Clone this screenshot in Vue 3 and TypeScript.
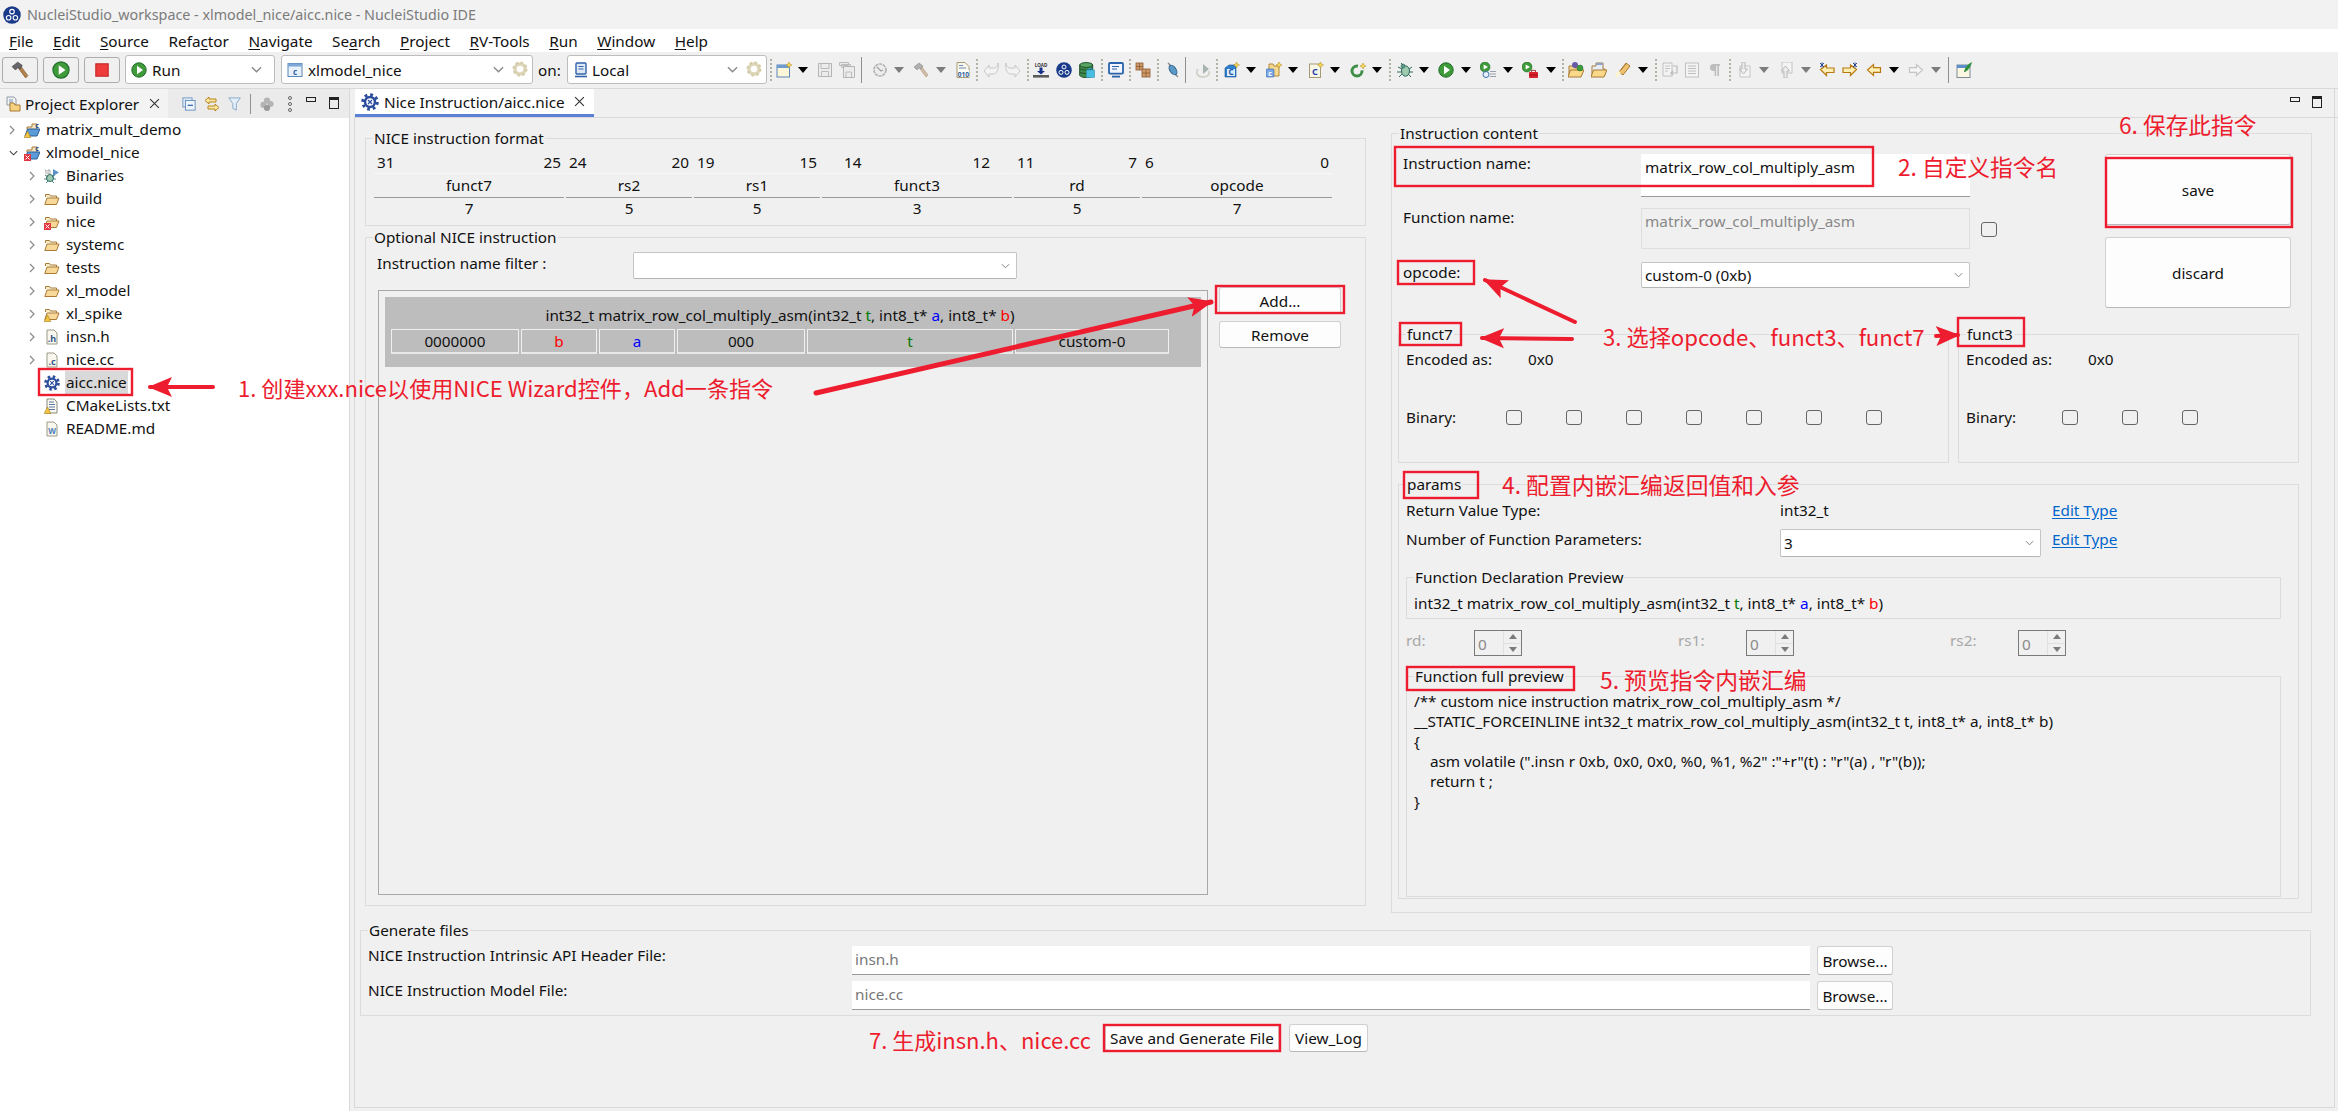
<script setup lang="ts">
interface TbItem { k: string; x: number }
const tbRaw: TbItem[] = [
  { k: 'dot', x: 769 }, { k: 'new', x: 775 }, { k: 'caret', x: 797 }, { k: 'save', x: 816 }, { k: 'saveall', x: 838 }, { k: 'sep', x: 860 },
  { k: 'gearg', x: 871 }, { k: 'caretg', x: 893 }, { k: 'hammerg', x: 912 }, { k: 'caretg', x: 935 }, { k: 'bin', x: 954 }, { k: 'dot', x: 975 },
  { k: 'backg', x: 982 }, { k: 'fwdg', x: 1004 }, { k: 'dot', x: 1026 }, { k: 'load', x: 1032 }, { k: 'nuclei', x: 1055 }, { k: 'db', x: 1078 }, { k: 'dot', x: 1100 },
  { k: 'monitor', x: 1107 }, { k: 'dot', x: 1128 }, { k: 'bricks', x: 1134 }, { k: 'dot', x: 1156 }, { k: 'probe', x: 1164 }, { k: 'sep', x: 1184 },
  { k: 'redo', x: 1194 }, { k: 'dot', x: 1215 }, { k: 'newc', x: 1223 }, { k: 'caret', x: 1245 }, { k: 'newf', x: 1265 }, { k: 'caret', x: 1287 },
  { k: 'newfile', x: 1307 }, { k: 'caret', x: 1329 }, { k: 'newcls', x: 1349 }, { k: 'caret', x: 1371 }, { k: 'dot', x: 1388 }, { k: 'bug', x: 1396 },
  { k: 'caret', x: 1418 }, { k: 'play', x: 1437 }, { k: 'caret', x: 1460 }, { k: 'runlist', x: 1479 }, { k: 'caret', x: 1502 }, { k: 'runtool', x: 1521 },
  { k: 'caret', x: 1545 }, { k: 'dot', x: 1561 }, { k: 'opendb', x: 1567 }, { k: 'openf', x: 1590 }, { k: 'pen', x: 1614 }, { k: 'caret', x: 1637 }, { k: 'dot', x: 1654 },
  { k: 'fmtg', x: 1661 }, { k: 'blockg', x: 1683 }, { k: 'para', x: 1706 }, { k: 'dot', x: 1728 }, { k: 'nextg', x: 1736 }, { k: 'caretg', x: 1758 },
  { k: 'prevg', x: 1778 }, { k: 'caretg', x: 1800 }, { k: 'backs', x: 1818 }, { k: 'fwds', x: 1841 }, { k: 'back', x: 1865 }, { k: 'caret', x: 1888 },
  { k: 'fwdg2', x: 1907 }, { k: 'caretg', x: 1930 }, { k: 'sep', x: 1947 }, { k: 'notes', x: 1955 }
]
const toolbar = tbRaw.map((it, i) => ({
  ...it,
  w: i + 1 < tbRaw.length ? tbRaw[i + 1].x - it.x : 16
}))

const menu = [
  ['', 'F', 'ile'], ['', 'E', 'dit'], ['', 'S', 'ource'], ['Refa', 'c', 'tor'], ['', 'N', 'avigate'], ['Se', 'a', 'rch'],
  ['', 'P', 'roject'], ['', 'R', 'V-Tools'], ['', 'R', 'un'], ['', 'W', 'indow'], ['', 'H', 'elp']
]

const tree = [
  { t: 'matrix_mult_demo', lv: 0, ic: 'projw', ch: 'r' },
  { t: 'xlmodel_nice', lv: 0, ic: 'projx', ch: 'd' },
  { t: 'Binaries', lv: 1, ic: 'binaries', ch: 'r' },
  { t: 'build', lv: 1, ic: 'folder', ch: 'r' },
  { t: 'nice', lv: 1, ic: 'folderx', ch: 'r' },
  { t: 'systemc', lv: 1, ic: 'folder', ch: 'r' },
  { t: 'tests', lv: 1, ic: 'folder', ch: 'r' },
  { t: 'xl_model', lv: 1, ic: 'folder', ch: 'r' },
  { t: 'xl_spike', lv: 1, ic: 'folderw', ch: 'r' },
  { t: 'insn.h', lv: 1, ic: 'hfile', ch: 'r' },
  { t: 'nice.cc', lv: 1, ic: 'cfile', ch: 'r' },
  { t: 'aicc.nice', lv: 1, ic: 'gear', ch: '', sel: true },
  { t: 'CMakeLists.txt', lv: 1, ic: 'txtw', ch: '' },
  { t: 'README.md', lv: 1, ic: 'wdoc', ch: '' }
]

const fmt = [
  { hi: '31', lo: '25', n: 'funct7', c: '7', w: 190, wide: false },
  { hi: '24', lo: '20', n: 'rs2', c: '5', w: 126, wide: false },
  { hi: '19', lo: '15', n: 'rs1', c: '5', w: 126, wide: false },
  { hi: '14', lo: '12', n: 'funct3', c: '3', w: 190, wide: true },
  { hi: '11', lo: '7', n: 'rd', c: '5', w: 126, wide: false },
  { hi: '6', lo: '0', n: 'opcode', c: '7', w: 190, wide: false }
]

const cells = [
  { t: '0000000', w: 128, cls: '' }, { t: 'b', w: 76, cls: 'red' }, { t: 'a', w: 76, cls: 'blue' },
  { t: '000', w: 128, cls: '' }, { t: 't', w: 206, cls: 'green' }, { t: 'custom-0', w: 154, cls: '' }
]

const funct = [
  { name: 'funct7', w: 551, lab: 100, boxes: 7 },
  { name: 'funct3', w: 341, lab: 96, boxes: 3 }
]

const spins = ['rd:', 'rs1:', 'rs2:']

const redRects = [
  [39, 369, 132, 395], [1216, 286, 1344, 313], [1395, 147, 1873, 186], [1398, 261, 1474, 284],
  [1400, 323, 1461, 345], [1958, 318, 2024, 346], [2106, 158, 2292, 227], [1404, 472, 1478, 498],
  [1407, 667, 1574, 690], [1104, 1025, 1280, 1051]
]

const arrows = [
  [213, 387, 150, 387, 4], [816, 393, 1211, 302, 5], [1575, 322, 1485, 280, 4],
  [1572, 339, 1482, 338, 4], [1936, 336, 1958, 335, 4]
]

const notes = [
  { t: '1. 创建xxx.nice以使用NICE Wizard控件，Add一条指令', x: 238, y: 387, fs: 22.1 },
  { t: '2. 自定义指令名', x: 1898, y: 167, fs: 22.7 },
  { t: '3. 选择opcode、funct3、funct7', x: 1603, y: 336, fs: 22.2 },
  { t: '4. 配置内嵌汇编返回值和入参', x: 1502, y: 485, fs: 22.8 },
  { t: '5. 预览指令内嵌汇编', x: 1600, y: 680, fs: 22.8 },
  { t: '6. 保存此指令', x: 2119, y: 125, fs: 22.7 },
  { t: '7. 生成insn.h、nice.cc', x: 869, y: 1039, fs: 22 }
]
</script>

<template>
  <div class="ide">
    <svg class="defs" width="0" height="0" aria-hidden="true">
      <defs>
        <symbol id="play" viewBox="0 0 16 16"><circle cx="8" cy="8" r="7.2" fill="#3f9a3a" stroke="#1f6b2a" /><path d="M6 3.8L12 8l-6 4.2z" fill="#fff" /></symbol>
        <symbol id="stop" viewBox="0 0 16 16"><rect x="2.5" y="2.5" width="11" height="11" fill="#ee3b3b" stroke="#c32a2a" /></symbol>
        <symbol id="hammer" viewBox="0 0 16 16"><path d="M7 7l2-2 6 8-2 2z" fill="#b5824e" stroke="#7a5428" stroke-width=".6" /><path d="M1 5l5-4 4 3-2 3-2-1-2 2z" fill="#66666a" stroke="#3a3a3a" stroke-width=".6" /></symbol>
        <symbol id="hammerg" viewBox="0 0 16 16"><path d="M7 7l2-2 6 8-2 2z" fill="#d4bca4" stroke="#a89880" stroke-width=".6" /><path d="M1 5l5-4 4 3-2 3-2-1-2 2z" fill="#b0b0b0" stroke="#8c8c8c" stroke-width=".6" /></symbol>
        <symbol id="cbox" viewBox="0 0 16 16"><rect x="1" y="1.5" width="14" height="13" fill="#e8f0fa" stroke="#5a86b5" /><rect x="1" y="1.5" width="14" height="3" fill="#7da7d6" /><text x="8" y="12.8" font-size="8" font-weight="700" fill="#2b62a8" text-anchor="middle" font-family="Noto Sans">c</text></symbol>
        <symbol id="computer" viewBox="0 0 16 16"><rect x="3" y="1" width="10" height="11" rx="1" fill="#dfe9f6" stroke="#2f63a8" stroke-width="1.4" /><path d="M5.5 4.5h5M5.5 7h5" stroke="#2f63a8" /><path d="M2 14.5h12" stroke="#2f63a8" stroke-width="1.6" /></symbol>
        <symbol id="cfgear" viewBox="0 0 16 16"><circle cx="8" cy="8" r="5" fill="none" stroke="#ddd6b8" stroke-width="3.4" /><circle cx="8" cy="8" r="6.4" fill="none" stroke="#d3cba8" stroke-width="2.2" stroke-dasharray="2.4 2.6" /></symbol>
        <symbol id="new" viewBox="0 0 16 16"><rect x="1" y="3" width="12.5" height="12" fill="#fdf6d8" stroke="#5a86b5" /><rect x="1" y="3" width="12.5" height="3" fill="#6d9bd0" /><path d="M13 0l1 2 2 1-2 1-1 2-1-2-2-1 2-1z" fill="#f7d65c" stroke="#b08a1f" stroke-width=".5" /></symbol>
        <symbol id="save" viewBox="0 0 16 16"><path d="M1.5 1.5h13v13h-13z" fill="#ececec" stroke="#b4b4b4" /><path d="M4 1.5v5h8v-5M4.5 14.5v-5h7v5" fill="none" stroke="#bcbcbc" /></symbol>
        <symbol id="saveall" viewBox="0 0 16 16"><path d="M.5.5h9v3h-9zM2.5 2.5h9v3h-9z" fill="#e8e8e8" stroke="#bcbcbc" /><path d="M4.5 4.5h11v11h-11z" fill="#ececec" stroke="#b4b4b4" /><path d="M7 15v-5h5.5v5" fill="none" stroke="#bcbcbc" /></symbol>
        <symbol id="gearg" viewBox="0 0 16 16"><circle cx="8" cy="8" r="6" fill="#ececec" stroke="#b0b0b0" stroke-width="1.6" stroke-dasharray="3 .8" /><path d="M5 5l4 4 2-1" fill="none" stroke="#a0a0a0" stroke-width="1.2" /></symbol>
        <symbol id="bin" viewBox="0 0 16 16"><path d="M2 .5h8l4 4v11H2z" fill="#faf7ec" stroke="#a89a74" /><path d="M4 3.5h4M4 6h7" stroke="#6d8dbb" /><rect x="3" y="8" width="11" height="7" fill="#fff" /><text x="8.5" y="14.6" font-size="6.6" font-weight="700" fill="#2c5a96" text-anchor="middle" font-family="Noto Sans">010</text></symbol>
        <symbol id="backg" viewBox="0 0 16 16"><path d="M1 9l5-6v3h5c3 0 4-3 4-5 1 6-1 11-5 11H6v3z" fill="#f3f3f3" stroke="#c8c8c8" /></symbol>
        <symbol id="fwdg" viewBox="0 0 16 16"><path d="M15 9l-5-6v3H5C2 6 1 3 1 1 0 7 2 12 6 12h4v3z" fill="#f3f3f3" stroke="#c8c8c8" /></symbol>
        <symbol id="load" viewBox="0 0 16 16"><text x="8" y="4.6" font-size="4.6" font-weight="700" fill="#333" text-anchor="middle" font-family="Noto Sans">LOAD</text><path d="M6.5 5.5h3v3.5h2.5L8 12.5 4 9h2.5z" fill="#16318a" /><rect x="0" y="13" width="16" height="2.6" fill="#5b5b5b" /></symbol>
        <symbol id="nuclei" viewBox="0 0 16 16"><circle cx="8" cy="8" r="7.8" fill="#19398a" /><g fill="none" stroke="#fff" stroke-width="1"><circle cx="8" cy="5" r="2" /><circle cx="5" cy="10.4" r="2" /><circle cx="11" cy="10.4" r="2" /></g></symbol>
        <symbol id="db" viewBox="0 0 16 16"><path d="M.7 3v10c0 1.5 3 2.6 6.5 2.6s6.5-1.1 6.5-2.6V3z" fill="#3f8a4a" stroke="#1f4f2a" /><ellipse cx="7.2" cy="3" rx="6.5" ry="2.4" fill="#5aa563" stroke="#1f4f2a" /><path d="M.7 6.5c2 2 11 2 13 0M.7 10c2 2 11 2 13 0" fill="none" stroke="#1f4f2a" /><rect x="7.5" y="8" width="8" height="7.5" fill="#49bde0" stroke="#2f93b8" stroke-width=".6" /><path d="M9.8 8V6.5h3V8" fill="none" stroke="#2f93b8" /></symbol>
        <symbol id="monitor" viewBox="0 0 16 16"><rect x="1" y="1" width="14" height="10.6" rx="1" fill="#f2f6fc" stroke="#2a62ab" stroke-width="1.8" /><path d="M4 4.5h7M4 7h5" stroke="#2a62ab" /><path d="M4 14.6h8" stroke="#2a62ab" stroke-width="1.8" /></symbol>
        <symbol id="bricks" viewBox="0 0 16 16"><g fill="#cf9a6a" stroke="#8d5a32" stroke-width=".8"><rect x="1" y="1" width="7" height="7" /><rect x="7" y="7" width="8" height="8" /></g><path d="M4.5 1v7M1 4.5h7M11 7v8M7 11h8" stroke="#8d5a32" stroke-width=".8" /></symbol>
        <symbol id="probe" viewBox="0 0 16 16"><path d="M3 1l3 3M10 12l3 3" stroke="#888" stroke-width="1.4" /><ellipse cx="8" cy="8" rx="3" ry="5.4" transform="rotate(-35 8 8)" fill="#5a9ac8" stroke="#2a5f8a" /></symbol>
        <symbol id="redo" viewBox="0 0 16 16"><path d="M8 2l6 5-6 5z" fill="#a8b4b0" /><path d="M3 7c-3 4 0 8 5 8s7-3 6-6" fill="none" stroke="#cfcfc6" stroke-width="1.6" /></symbol>
        <symbol id="newc" viewBox="0 0 16 16"><path d="M1 6l4-3h7v12H1z" fill="#2f7fd0" stroke="#15508f" stroke-width=".6" /><rect x="3" y="7" width="8" height="7" fill="#d8ecfa" /><text x="7" y="13.4" font-size="8" font-weight="700" fill="#1a55a0" text-anchor="middle" font-family="Noto Sans">C</text><path d="M12.5 0l1 2 2 1-2 1-1 2-1-2-2-1 2-1z" fill="#f7d65c" stroke="#b08a1f" stroke-width=".5" /></symbol>
        <symbol id="newf" viewBox="0 0 16 16"><path d="M3 4V2h4l1 2h5v10H3z" fill="#f6d98e" stroke="#b08a3f" /><rect x="0" y="7" width="8" height="8" rx="1" fill="#7da7e6" stroke="#2f63a8" stroke-width=".6" /><text x="4" y="13.6" font-size="7" font-weight="700" fill="#fff" text-anchor="middle" font-family="Noto Sans">c</text><path d="M13 0l1 2 2 1-2 1-1 2-1-2-2-1 2-1z" fill="#f7d65c" stroke="#b08a1f" stroke-width=".5" /></symbol>
        <symbol id="newfile" viewBox="0 0 16 16"><rect x="1.5" y="2" width="11" height="13.5" fill="#f8f6e4" stroke="#a89a74" /><text x="7" y="12.6" font-size="9" font-weight="700" fill="#2444b0" text-anchor="middle" font-family="Noto Sans">C</text><path d="M12.5 0l1 2 2 1-2 1-1 2-1-2-2-1 2-1z" fill="#f7d65c" stroke="#b08a1f" stroke-width=".5" /></symbol>
        <symbol id="newcls" viewBox="0 0 16 16"><circle cx="7" cy="9" r="5" fill="none" stroke="#3f8f48" stroke-width="3" stroke-dasharray="24 6" /><path d="M13 1l1 2 2 1-2 1-1 2-1-2-2-1 2-1z" fill="#f7d65c" stroke="#b08a1f" stroke-width=".5" /></symbol>
        <symbol id="bug" viewBox="0 0 16 16"><ellipse cx="8.5" cy="9" rx="4" ry="5.2" fill="#9ecab0" stroke="#2d6a5a" /><circle cx="6" cy="4" r="2" fill="#5d9a88" stroke="#2d6a5a" stroke-width=".6" /><path d="M1 5l4 2M0 10h4M2 15l3-3M15 5l-3 2M16 10h-4M14 15l-3-3M4 1l2 2" stroke="#2d6a5a" /></symbol>
        <symbol id="runlist" viewBox="0 0 16 16"><circle cx="5" cy="5" r="5" fill="#3f9a3a" stroke="#1f6b2a" stroke-width=".6" /><path d="M3.6 2.6L8 5 3.6 7.4z" fill="#fff" /><circle cx="6" cy="12.5" r="3" fill="#e8f0fa" stroke="#3d6fb0" /><path d="M10 9.5h6M10 12h6M10 14.5h6" stroke="#9aa2ae" /></symbol>
        <symbol id="runtool" viewBox="0 0 16 16"><circle cx="5" cy="5" r="5" fill="#3f9a3a" stroke="#1f6b2a" stroke-width=".6" /><path d="M3.6 2.6L8 5 3.6 7.4z" fill="#fff" /><rect x="7" y="10" width="9" height="6" rx=".8" fill="#d9222a" /><path d="M9.5 10V8.4h4V10M7 13h9" fill="none" stroke="#8e1014" stroke-width=".8" /></symbol>
        <symbol id="opendb" viewBox="0 0 16 16"><path d="M1 6V4h5l1 2h6v7H1z" fill="#f3d590" stroke="#a97a36" /><path d="M0 15l2.5-7H16l-3 7z" fill="#f8d98a" stroke="#a97a36" /><circle cx="7" cy="3" r="3" fill="#6a5aa8" /><circle cx="12" cy="6" r="3" fill="#3f9a3a" stroke="#1f6b2a" stroke-width=".5" /></symbol>
        <symbol id="openf" viewBox="0 0 16 16"><path d="M1 6V4h4V1h7v6h2v6H1z" fill="#e8eef7" stroke="#a97a36" /><path d="M5 1h7v2H5z" fill="#8ea4c8" /><path d="M0 15l2.5-7H16l-3 7z" fill="#f8d98a" stroke="#a97a36" /></symbol>
        <symbol id="pen" viewBox="0 0 16 16"><path d="M11 1l4 3-7 9-4-3z" fill="#efc36e" stroke="#a97a36" /><path d="M5 10l-4 4" stroke="#fff5c8" stroke-width="3" /><path d="M6 8l5-6" stroke="#8a6a2a" stroke-width=".6" /></symbol>
        <symbol id="fmtg" viewBox="0 0 16 16"><path d="M1 1h9v13H1z" fill="#f4f4f4" stroke="#c0c0c0" /><path d="M3 4h5M3 6.5h5M3 9h3" stroke="#c0c0c0" /><path d="M11 4h4v7H9l2-2m-2 2l2 2" fill="none" stroke="#bcbcbc" stroke-width="1.2" /></symbol>
        <symbol id="blockg" viewBox="0 0 16 16"><rect x="1.5" y="1" width="13" height="14" fill="#f4f4f4" stroke="#c0c0c0" /><path d="M4 4h8M4 6.5h8M4 9h8M4 11.5h8" stroke="#bcbcbc" /></symbol>
        <symbol id="para" viewBox="0 0 16 16"><path d="M6.500 2H13v1.800h-1V14h-1.600V3.800H9.200V14H7.600V9C4 9 3 7.500 3 5.500S4 2 6.500 2z" fill="#bdbdbd" /></symbol>
        <symbol id="nextg" viewBox="0 0 16 16"><path d="M3 4h10v11H3z" fill="#f4f4f4" stroke="#c4c4c4" /><path d="M5 0h3v7h2.500L6.500 12 2.500 7H5z" fill="#eee" stroke="#b8b8b8" /></symbol>
        <symbol id="prevg" viewBox="0 0 16 16"><path d="M3 0h10v11H3z" fill="#f4f4f4" stroke="#c4c4c4" /><path d="M5 16V9H2.500l4-5 4 5H8v7z" fill="#eee" stroke="#b8b8b8" /></symbol>
        <symbol id="backs" viewBox="0 0 16 16"><path d="M1.500 7.500l6-4.500v3h7.500v4.500H7.500v3z" fill="#fdeeb4" stroke="#b87a12" stroke-width="1.200" /><path d="M1 1l4 4M5 1L1 5M3 .4v5" stroke="#1d3f8a" stroke-width=".9" /></symbol>
        <symbol id="fwds" viewBox="0 0 16 16"><path d="M14.500 7.500l-6-4.500v3H1v4.500h7.500v3z" fill="#fdeeb4" stroke="#b87a12" stroke-width="1.200" /><path d="M11 1l4 4M15 1l-4 4M13 .4v5" stroke="#1d3f8a" stroke-width=".9" /></symbol>
        <symbol id="back" viewBox="0 0 16 16"><path d="M1.500 8l6-5.500v3.200h7v4.600h-7v3.200z" fill="#fdeeb4" stroke="#b87a12" stroke-width="1.200" /></symbol>
        <symbol id="fwdg2" viewBox="0 0 16 16"><path d="M14.500 8l-6-5.500v3.200h-7v4.600h7v3.200z" fill="#f5f5f5" stroke="#c4c4c4" stroke-width="1.200" /></symbol>
        <symbol id="notes" viewBox="0 0 16 16"><rect x="1" y="3" width="13" height="12.500" fill="#fbf6e2" stroke="#7c8a98" /><rect x="1" y="3" width="13" height="3" fill="#5d8fca" /><path d="M8 10c1-5 4-8 8-10-1 4-3 8-7 10z" fill="#2f8f3a" /></symbol>
        <symbol id="collapse" viewBox="0 0 16 16"><rect x="1" y="1" width="10.500" height="10.500" fill="#dce8f6" stroke="#6f97c2" /><rect x="4" y="4" width="11" height="11" fill="#eef4fb" stroke="#5f8ab8" /><path d="M6.500 9.500h6" stroke="#2f63a8" stroke-width="1.400" /></symbol>
        <symbol id="link" viewBox="0 0 16 16"><path d="M5 1L1 4.500 5 8V6h7V3H5zM11 8l4 3.500L11 15v-2H4v-3h7z" fill="#fbe6a2" stroke="#b8861c" /></symbol>
        <symbol id="filter" viewBox="0 0 16 16"><path d="M1 1h13L9.500 7.500V15l-4-2V7.500z" fill="#e4eef9" stroke="#7fa4c8" /></symbol>
        <symbol id="balls" viewBox="0 0 16 16"><g fill="#b4b4b4"><circle cx="8" cy="4" r="3.500" /><circle cx="4" cy="9" r="3.500" /><circle cx="12" cy="8" r="3.500" /><circle cx="8" cy="12.500" r="3.500" fill="#9a9a9a" /></g></symbol>
        <symbol id="folder" viewBox="0 0 16 16"><path d="M1.500 6V3.500h4l1 1.500h6v2" fill="#f9ecc9" stroke="#a97a36" /><path d="M.8 13.500L3 7h12l-2.500 6.500z" fill="#f9d99a" stroke="#a97a36" /></symbol>
        <symbol id="folderx" viewBox="0 0 16 16"><use href="#folder" /><rect x="0" y="9" width="7" height="7" fill="#e0353f" /><path d="M1.500 10.500l4 4m0-4l-4 4" stroke="#fff" /></symbol>
        <symbol id="folderw" viewBox="0 0 16 16"><use href="#folder" /><path d="M3.500 9l3.300 6.500H.2z" fill="#f6c443" stroke="#a07b1a" stroke-width=".6" /></symbol>
        <symbol id="proj" viewBox="0 0 16 16"><path d="M3 7V5h5V2h5v5" fill="#f4e7c4" stroke="#a97a36" /><path d="M1 14l2.500-7H16l-3 7z" fill="#5a9ad8" stroke="#2c5f94" /><text x="13" y="5.600" font-size="7" font-weight="700" fill="#1d4c8f" text-anchor="middle" font-family="Noto Sans">c</text></symbol>
        <symbol id="projw" viewBox="0 0 16 16"><use href="#proj" /><path d="M3.500 9l3.300 6.500H.2z" fill="#f6c443" stroke="#a07b1a" stroke-width=".6" /></symbol>
        <symbol id="projx" viewBox="0 0 16 16"><use href="#proj" /><rect x="0" y="9" width="7" height="7" fill="#e0353f" /><path d="M1.500 10.500l4 4m0-4l-4 4" stroke="#fff" /></symbol>
        <symbol id="binaries" viewBox="0 0 16 16"><path d="M9 1v7l6-3.500z" fill="#5d92c8" /><circle cx="6" cy="10" r="3.500" fill="#9ecab0" stroke="#2d6a6a" /><path d="M1 7l3 2M0 11h3M2 15l2-2M11 7L8 9M12 11H9M10 15l-2-2" stroke="#2d6a6a" stroke-width=".8" /><path d="M1 2h1v4M4 2h2v4H4z" fill="none" stroke="#888" stroke-width=".7" /></symbol>
        <symbol id="hfile" viewBox="0 0 16 16"><path d="M3 1h7l3 3v11H3z" fill="#f9f7ee" stroke="#9a9a88" /><text x="8" y="12.500" font-size="9" font-weight="700" fill="#32558a" text-anchor="middle" font-family="Noto Sans">.h</text></symbol>
        <symbol id="cfile" viewBox="0 0 16 16"><path d="M3 1h7l3 3v11H3z" fill="#f9f7ee" stroke="#9a9a88" /><text x="8" y="12.500" font-size="9" font-weight="700" fill="#32558a" text-anchor="middle" font-family="Noto Sans">.c</text></symbol>
        <symbol id="gear" viewBox="0 0 16 16"><circle cx="8" cy="8" r="6.500" fill="none" stroke="#2c4c9c" stroke-width="2.600" stroke-dasharray="2.500 2.600" /><circle cx="8" cy="8" r="4.400" fill="#fff" stroke="#2c4c9c" stroke-width="2.200" /><path d="M6.200 6.200l3.600 3.600m0-3.600L6.200 9.800" stroke="#2c4c9c" stroke-width="1.100" /></symbol>
        <symbol id="txtw" viewBox="0 0 16 16"><path d="M3 1h7l3 3v11H3z" fill="#f9f7ee" stroke="#8a8a80" /><path d="M5 4h5M5 6.500h6M5 9h6M5 11.500h6" stroke="#5a7ba8" /><path d="M3.500 9l3.300 6.500H.2z" fill="#f6c443" stroke="#a07b1a" stroke-width=".6" /></symbol>
        <symbol id="wdoc" viewBox="0 0 16 16"><path d="M3 1h7l3 3v11H3z" fill="#f9f7ee" stroke="#9a9a88" /><text x="8" y="12.500" font-size="8" font-weight="700" fill="#4d7dbd" text-anchor="middle" font-family="Noto Sans">W</text></symbol>
        <symbol id="explorer" viewBox="0 0 16 16"><path d="M2 1h7l2 2v6H2z" fill="#f4f4f4" stroke="#8f9aa8" /><path d="M4 4h4M4 6h4" stroke="#7a93b8" /><path d="M5 9V7h4l1 2h5v6H5z" fill="#f5d27f" stroke="#a97a36" /></symbol>
        <marker id="ah" markerUnits="userSpaceOnUse" markerWidth="26" markerHeight="22" refX="22" refY="11" orient="auto"><path d="M0 1L24 11 0 21 5 11z" fill="#ed1c2e" /></marker>
      </defs>
    </svg>

    <header class="titlebar">
      <svg class="logo"><use href="#nuclei" /></svg>
      <span>NucleiStudio_workspace - xlmodel_nice/aicc.nice - NucleiStudio IDE</span>
    </header>

    <nav class="menubar">
      <span v-for="(m, i) in menu" :key="i" class="menu-item">{{ m[0] }}<u>{{ m[1] }}</u>{{ m[2] }}</span>
    </nav>

    <div class="toolbar">
      <button class="tbtn"><svg class="i18"><use href="#hammer" /></svg></button>
      <button class="tbtn"><svg class="i18"><use href="#play" /></svg></button>
      <button class="tbtn"><svg class="i18"><use href="#stop" /></svg></button>
      <div class="tcombo run">
        <svg class="i16"><use href="#play" /></svg><span class="tc-label">Run</span>
        <svg class="chev" viewBox="0 0 12 8"><path d="M1 1l5 5 5-5" /></svg>
      </div>
      <div class="tcombo cfg">
        <svg class="i16"><use href="#cbox" /></svg><span class="tc-label">xlmodel_nice</span>
        <svg class="chev" viewBox="0 0 12 8"><path d="M1 1l5 5 5-5" /></svg>
        <svg class="i16 cg"><use href="#cfgear" /></svg>
      </div>
      <span class="on">on:</span>
      <div class="tcombo loc">
        <svg class="i16"><use href="#computer" /></svg><span class="tc-label">Local</span>
        <svg class="chev" viewBox="0 0 12 8"><path d="M1 1l5 5 5-5" /></svg>
        <svg class="i16 cg"><use href="#cfgear" /></svg>
      </div>
      <div class="tb-items">
        <div v-for="(it, i) in toolbar" :key="i" class="tb-slot" :style="{ width: it.w + 'px' }">
          <i v-if="it.k === 'caret'" class="caret"></i>
          <i v-else-if="it.k === 'caretg'" class="caret grey"></i>
          <i v-else-if="it.k === 'dot'" class="dotsep"></i>
          <i v-else-if="it.k === 'sep'" class="solidsep"></i>
          <svg v-else class="i16"><use :href="'#' + it.k" /></svg>
        </div>
      </div>
    </div>

    <main class="workbench">
      <aside class="explorer">
        <div class="ex-tabs">
          <div class="ex-tab">
            <svg class="i16"><use href="#explorer" /></svg>
            <span>Project Explorer</span>
            <svg class="close" viewBox="0 0 10 10"><path d="M1 1l8 8M9 1l-8 8" /></svg>
          </div>
          <div class="ex-tools">
            <svg class="i14 t1"><use href="#collapse" /></svg>
            <svg class="i16 t2"><use href="#link" /></svg>
            <svg class="i14 t3"><use href="#filter" /></svg>
            <i class="solidsep t4"></i>
            <svg class="i14 t5"><use href="#balls" /></svg>
            <span class="kebab t6"><b></b><b></b><b></b></span>
            <i class="minbtn t7"></i>
            <i class="maxbtn t8"></i>
          </div>
        </div>
        <ul class="tree">
          <li v-for="n in tree" :key="n.t" class="node" :class="'lv' + n.lv">
            <svg v-if="n.ch === 'r'" class="tw" viewBox="0 0 8 12"><path d="M2 2l4 4-4 4" /></svg>
            <svg v-else-if="n.ch === 'd'" class="tw dn" viewBox="0 0 12 8"><path d="M2 2l4 4 4-4" /></svg>
            <span v-else class="tw"></span>
            <svg class="i16 nic"><use :href="'#' + n.ic" /></svg>
            <span class="nlabel" :class="{ sel: n.sel }">{{ n.t }}</span>
          </li>
        </ul>
      </aside>

      <section class="editor">
        <div class="ed-tabs">
          <div class="ed-tab">
            <svg class="i18"><use href="#gear" /></svg>
            <span>Nice Instruction/aicc.nice</span>
            <svg class="close" viewBox="0 0 10 10"><path d="M1 1l8 8M9 1l-8 8" /></svg>
          </div>
          <div class="ed-win"><i class="minbtn"></i><i class="maxbtn"></i></div>
        </div>

        <div class="ed-body">
          <div class="cols">
            <div class="left">
              <div class="group g-format">
                <span class="legend">NICE instruction format</span>
                <div class="fmt">
                  <div v-for="f in fmt" :key="f.n" class="fcol" :style="{ width: f.w + 'px' }">
                    <div class="bits" :class="{ wide: f.wide }"><span>{{ f.hi }}</span><span>{{ f.lo }}</span></div>
                    <div class="fhead">{{ f.n }}</div>
                    <div class="fcount">{{ f.c }}</div>
                  </div>
                </div>
              </div>

              <div class="group g-opt">
                <span class="legend">Optional NICE instruction</span>
                <div class="filter-row">
                  <span class="filter-label">Instruction name filter :</span>
                  <div class="combo filter-combo">
                    <svg class="cchev" viewBox="0 0 10 6"><path d="M1 1l4 4 4-4" /></svg>
                  </div>
                </div>
                <div class="list-row">
                  <div class="listbox">
                    <div class="insn">
                      <div class="insn-title">int32_t matrix_row_col_multiply_asm(int32_t <span class="green">t</span>, int8_t* <span class="blue">a</span>, int8_t* <span class="red">b</span>)</div>
                      <div class="insn-cells">
                        <div v-for="(c, i) in cells" :key="i" class="icell" :class="c.cls" :style="{ width: c.w + 'px' }">{{ c.t }}</div>
                      </div>
                    </div>
                  </div>
                  <div class="list-btns">
                    <button class="btn add">Add...</button>
                    <button class="btn remove">Remove</button>
                  </div>
                </div>
              </div>
            </div>

            <div class="right">
              <div class="group g-content">
                <span class="legend">Instruction content</span>
                <div class="top-sec">
                  <div class="formcol">
                    <div class="frow r1">
                      <span class="flabel">Instruction name:</span>
                      <div class="tinput">matrix_row_col_multiply_asm</div>
                    </div>
                    <div class="frow r2">
                      <span class="flabel">Function name:</span>
                      <div class="tinput dis">matrix_row_col_multiply_asm</div>
                      <i class="cb fcb"></i>
                    </div>
                    <div class="frow r3">
                      <span class="flabel">opcode:</span>
                      <div class="combo op-combo">
                        <span>custom-0 (0xb)</span>
                        <svg class="cchev" viewBox="0 0 10 6"><path d="M1 1l4 4 4-4" /></svg>
                      </div>
                    </div>
                  </div>
                  <div class="actions">
                    <button class="btn big">save</button>
                    <button class="btn big">discard</button>
                  </div>
                </div>

                <div class="funct-row">
                  <div v-for="f in funct" :key="f.name" class="group g-funct" :style="{ width: f.w + 'px' }">
                    <span class="legend">{{ f.name }}</span>
                    <div class="enc"><span class="enc-l">Encoded as:</span><span>0x0</span></div>
                    <div class="binrow">
                      <span class="bin-l" :style="{ width: f.lab + 'px' }">Binary:</span>
                      <div class="boxes"><i v-for="b in f.boxes" :key="b" class="cb"></i></div>
                    </div>
                  </div>
                </div>

                <div class="group g-params">
                  <span class="legend">params</span>
                  <div class="prow p1">
                    <span class="p-l">Return Value Type:</span>
                    <span class="p-v">int32_t</span>
                    <a class="lnk">Edit Type</a>
                  </div>
                  <div class="prow p2">
                    <span class="p-l">Number of Function Parameters:</span>
                    <div class="combo num-combo">
                      <span>3</span>
                      <svg class="cchev" viewBox="0 0 10 6"><path d="M1 1l4 4 4-4" /></svg>
                    </div>
                    <a class="lnk lnk2">Edit Type</a>
                  </div>
                  <div class="group g-decl">
                    <span class="legend">Function Declaration Preview</span>
                    <div class="decl">int32_t matrix_row_col_multiply_asm(int32_t <span class="green">t</span>, int8_t* <span class="blue">a</span>, int8_t* <span class="red">b</span>)</div>
                  </div>
                  <div class="spins">
                    <div v-for="s in spins" :key="s" class="spin-cell">
                      <span class="spin-l">{{ s }}</span>
                      <div class="spin">
                        <span class="spin-v">0</span>
                        <div class="spin-b">
                          <i class="up"></i>
                          <i class="dn"></i>
                        </div>
                      </div>
                    </div>
                  </div>
                  <div class="group g-full">
                    <span class="legend">Function full preview</span>
                    <pre class="code">/** custom nice instruction matrix_row_col_multiply_asm */
__STATIC_FORCEINLINE int32_t matrix_row_col_multiply_asm(int32_t t, int8_t* a, int8_t* b)
{
    asm volatile (".insn r 0xb, 0x0, 0x0, %0, %1, %2" :"+r"(t) : "r"(a) , "r"(b));
    return t ;
}</pre>
                  </div>
                </div>
              </div>
            </div>
          </div>

          <div class="group g-gen">
            <span class="legend">Generate files</span>
            <div class="gen-row">
              <span class="gen-l">NICE Instruction Intrinsic API Header File:</span>
              <div class="gen-in">insn.h</div>
              <button class="btn browse">Browse...</button>
            </div>
            <div class="gen-row second">
              <span class="gen-l">NICE Instruction Model File:</span>
              <div class="gen-in">nice.cc</div>
              <button class="btn browse">Browse...</button>
            </div>
          </div>

          <div class="bottom-btns">
            <button class="btn gen-save">Save and Generate File</button>
            <button class="btn gen-log">View_Log</button>
          </div>
        </div>
      </section>
    </main>

    <!-- red review annotations drawn over the screenshot -->
    <svg class="overlay" width="2338" height="1111">
      <rect v-for="(r, i) in redRects" :key="'r' + i" :x="r[0]" :y="r[1]" :width="r[2] - r[0]" :height="r[3] - r[1]" fill="none" stroke="#ed1c2e" stroke-width="2.400" />
      <line v-for="(a, i) in arrows" :key="'a' + i" :x1="a[0]" :y1="a[1]" :x2="a[2]" :y2="a[3]" stroke="#ed1c2e" :stroke-width="a[4]" stroke-linecap="round" marker-end="url(#ah)" />
    </svg>
    <span v-for="n in notes" :key="n.t" class="note" :style="{ left: n.x + 'px', top: n.y - 11 + 'px', fontSize: n.fs + 'px' }">{{ n.t }}</span>
  </div>
</template>

<style>
body { margin: 0; background: #f0f0f0; }
</style>

<style scoped>
* { box-sizing: border-box; }
.ide {
  position: relative;
  width: 2338px;
  height: 1111px;
  overflow: hidden;
  background: #f0f0f0;
  color: #111;
  font: 15.3px/20px "Noto Sans", "Noto Sans CJK SC", sans-serif;
}
.defs { position: absolute; }
i { display: block; font-style: normal; }
button { font: inherit; color: inherit; margin: 0; padding: 0; }
.i14 { width: 14px; height: 14px; flex: none; }
.i16 { width: 16px; height: 16px; flex: none; }
.i18 { width: 18px; height: 18px; flex: none; }

.titlebar { height: 29px; display: flex; align-items: center; background: #f2f2f2; color: #7b7b7b; padding-left: 3px; gap: 6px; white-space: nowrap; font-size: 14.3px; }
.logo { width: 18px; height: 18px; }
.menubar { height: 23px; background: #fff; display: flex; align-items: center; padding-left: 9px; gap: 19.500px; white-space: nowrap; }
.menu-item u { text-underline-offset: 2px; text-decoration-thickness: 1px; }

.toolbar { height: 37px; display: flex; align-items: center; border-bottom: 1px solid #d9d9d9; padding: 0 0 1px 2px; }
.tbtn { width: 36px; height: 26px; margin-right: 5px; background: #f0f0f0; border: 1px solid #adadad; border-radius: 3px; display: flex; align-items: center; justify-content: center; }
.tcombo { height: 29px; background: #fff; border: 1px solid #bdbdbd; border-radius: 3px; display: flex; align-items: center; padding-left: 5px; position: relative; }
.tc-label { margin-left: 5px; }
.run { width: 150px; margin: 0 6px 0 0; }
.cfg { width: 252px; }
.loc { width: 200px; }
.loc .tc-label { margin-left: 3px; }
.on { width: 34px; padding-left: 5px; }
.chev { position: absolute; right: 12px; top: 10px; width: 11px; height: 8px; fill: none; stroke: #8a8a8a; stroke-width: 1.500; }
.cfg .chev, .loc .chev { right: 28px; }
.cg { position: absolute; right: 4px; top: 5px; }
.tb-items { display: flex; align-items: center; margin-left: 3px; }
.tb-slot { flex: none; height: 26px; display: flex; align-items: center; }
.caret { width: 0; height: 0; border-left: 5px solid transparent; border-right: 5px solid transparent; border-top: 6px solid #000; }
.caret.grey { border-top-color: #7c7c7c; }
.dotsep { width: 2px; height: 22px; background: repeating-linear-gradient(#b4b0a4 0 2px, transparent 2px 4px); }
.solidsep { width: 1px; height: 26px; background: #8f8f8f; }

.workbench { display: flex; height: 1022px; }
.explorer { width: 350px; flex: none; display: flex; flex-direction: column; border-right: 1px solid #d9d9d9; }
.ex-tabs { height: 29px; display: flex; background: #ebebeb; }
.ex-tab { width: 168px; background: #f3f3f3; display: flex; align-items: center; padding-left: 5px; gap: 4px; white-space: nowrap; }
.close { width: 11px; height: 11px; fill: none; stroke: #333; stroke-width: 1; margin-left: 6px; flex: none; }
.ex-tools { flex: 1; display: flex; align-items: center; }
.t1 { margin-left: 14px; }
.t2 { margin-left: 8px; }
.t3 { margin-left: 8px; }
.t4 { margin-left: 8px; height: 20px; }
.t5 { margin-left: 9px; }
.kebab { display: flex; flex-direction: column; gap: 2px; margin-left: 14px; }
.kebab b { width: 4px; height: 4px; border: 1px solid #666; border-radius: 50%; }
.minbtn { width: 10px; height: 5px; border: 1.500px solid #222; }
.maxbtn { width: 10px; height: 12px; border: 1.500px solid #222; border-top-width: 3px; }
.t7 { margin-left: 14px; margin-bottom: 8px; }
.t8 { margin-left: 13px; margin-bottom: 2px; }

.tree { flex: 1; margin: 0; padding: 0; list-style: none; background: #fff; }
.node { height: 23px; display: flex; align-items: center; white-space: nowrap; }
.node.lv0 { padding-left: 8px; }
.node.lv1 { padding-left: 28px; }
.tw { width: 8px; height: 12px; flex: none; fill: none; stroke: #8a8a8a; stroke-width: 1.200; }
.tw.dn { width: 11px; height: 8px; margin: 0 -3px 0 0; stroke: #444; }
.nic { margin-left: 8px; }
.nlabel { margin-left: 5px; padding: 0 1px; line-height: 23px; }
.nlabel.sel { background: #d9d9d9; }

.editor { flex: 1; display: flex; flex-direction: column; padding-left: 4px; }
.ed-tabs { height: 29px; display: flex; border-bottom: 1px solid #d9d9d9; border-top: 0; justify-content: space-between; }
.ed-tab { width: 239px; margin-left: 1px; height: 28px; background: #fff; border-bottom: 3px solid #5b80d8; display: flex; align-items: center; padding-left: 6px; gap: 5px; white-space: nowrap; }
.ed-tab .close { margin-left: 4px; }
.ed-win { display: flex; align-items: center; gap: 12px; padding-right: 12px; border-right: 1px solid #d9d9d9; margin-right: 3px; }
.ed-win .minbtn { margin-bottom: 8px; }
.ed-win .maxbtn { margin-bottom: 2px; }

.ed-body { height: 990px; margin-right: 3px; padding-left: 5px; border-left: 1px solid #d9d9d9; border-right: 1px solid #d9d9d9; border-bottom: 1px solid #d9d9d9; }
.cols { display: flex; height: 795px; padding-left: 5px; }
.left { width: 1001px; padding-top: 20px; flex: none; }
.right { width: 921px; margin-left: 25px; padding-top: 15px; flex: none; }

.group { position: relative; border: 1px solid #dcdcdc; }
.legend { position: absolute; top: -11px; left: 7px; padding: 0 1px; background: #f0f0f0; white-space: nowrap; }

.g-format { height: 88px; padding: 14px 0 0 8px; }
.fmt { display: flex; gap: 2px; }
.bits { height: 21px; line-height: 18px; display: flex; justify-content: space-between; padding: 0 3px; }
.bits.wide { padding: 0 22px; }
.fhead { height: 24px; line-height: 22px; text-align: center; border-bottom: 1px solid #9a9a9a; box-shadow: 0 -1px 0 #f8f8f8; }
.fcount { height: 21px; line-height: 20px; text-align: center; }

.g-opt { height: 669px; margin-top: 11px; padding-top: 14px; }
.filter-row { display: flex; padding-left: 11px; height: 27px; }
.filter-label { width: 256px; line-height: 22px; }
.combo { position: relative; background: #fff; border: 1px solid #c4c4c4; border-bottom-color: #b4b4b4; border-radius: 2px; display: flex; align-items: center; padding-left: 3px; }
.filter-combo { width: 384px; }
.cchev { position: absolute; right: 6px; top: 50%; margin-top: -3px; width: 9px; height: 6px; fill: none; stroke: #777; stroke-width: 1; }
.list-row { display: flex; margin-top: 11px; padding-left: 12px; }
.listbox { width: 830px; height: 605px; border: 1px solid #a8a8a8; padding: 6px; }
.insn { background: #bdbdbd; height: 70px; padding-top: 9px; }
.insn-title { width: 778px; margin-left: 6px; text-align: center; height: 23px; line-height: 18px; }
.insn-cells { display: flex; gap: 2px; padding-left: 6px; }
.icell { height: 25px; line-height: 23px; text-align: center; border: 1px solid #f0f0f0; border-bottom: 2px solid #e8e8e8; }
.red { color: #ff0000; }
.blue { color: #0000ff; }
.green { color: #007a00; }
.list-btns { display: flex; flex-direction: column; margin-left: 11px; margin-top: -3px; gap: 7px; }
.btn { background: #fdfdfd; border: 1px solid #d0d0d0; border-bottom-color: #b8b8b8; border-radius: 3px; text-align: center; white-space: nowrap; }
.list-btns .btn { width: 122px; height: 27px; }

.g-content { height: 780px; }
.top-sec { height: 200px; display: flex; padding: 20px 0 0 11px; }
.formcol { width: 702px; }
.frow { display: flex; }
.flabel { width: 238px; flex: none; }
.r1 .flabel { margin-top: -1px; }
.tinput { width: 329px; background: #fff; border-bottom: 1px solid #9a9a9a; padding: 3px 4px; white-space: nowrap; }
.r1 .tinput { height: 43px; }
.r2 { margin-top: 11px; position: relative; }
.r2 .flabel { margin-top: -1px; }
.tinput.dis { height: 41px; background: #f0f0f0; color: #888; border: 1px solid #dedede; padding: 2px 3px; }
.cb { width: 16px; height: 15px; border: 1px solid #666; border-radius: 3px; flex: none; }
.fcb { margin: 14px 0 0 11px; }
.r3 { margin-top: 13px; }
.op-combo { width: 329px; height: 26px; }
.actions { display: flex; flex-direction: column; gap: 12px; }
.btn.big { width: 186px; height: 71px; }
.funct-row { display: flex; padding-left: 6px; gap: 9px; }
.g-funct { height: 129px; padding: 14px 0 0 7px; }
.enc { display: flex; }
.enc-l { width: 122px; }
.binrow { display: flex; align-items: center; margin-top: 38px; height: 20px; }
.boxes { display: flex; gap: 44px; }

.g-params { width: 901px; height: 415px; margin: 21px 0 0 6px; padding: 15px 0 0 7px; }
.prow { display: flex; }
.p-l { width: 374px; flex: none; }
.p-v { width: 272px; }
.lnk { color: #0066cc; text-decoration: underline; text-underline-offset: 2px; }
.p2 { margin-top: 9px; }
.num-combo { width: 261px; height: 28px; }
.lnk2 { margin-left: 11px; }
.g-decl { width: 875px; height: 42px; margin-top: 20px; padding: 15px 0 0 7px; }
.spins { display: flex; margin-top: 11px; height: 26px; }
.spin-cell { width: 272px; display: flex; }
.spin-l { width: 68px; color: #a8a8a8; line-height: 20px; }
.spin { width: 48px; height: 26px; border: 1px solid #7a7a7a; display: flex; justify-content: space-between; padding-left: 3px; color: #8a8a8a; line-height: 26px; }
.spin-b { width: 18px; border-left: 1px solid #e0e0e0; display: flex; flex-direction: column; }
.spin-b i { flex: 1; display: flex; align-items: center; justify-content: center; position: relative; }
.spin-b .up::after, .spin-b .dn::after { content: ""; border-left: 4px solid transparent; border-right: 4px solid transparent; }
.spin-b .up { border-bottom: 1px solid #e0e0e0; }
.spin-b .up::after { border-bottom: 5px solid #7a7a7a; }
.spin-b .dn::after { border-top: 5px solid #7a7a7a; }
.g-full { width: 875px; height: 221px; margin-top: 20px; padding: 14px 0 0 7px; }
.code { margin: 0; font: inherit; white-space: pre; }

.g-gen { width: 1951px; height: 86px; margin-top: 17px; padding: 15px 0 0 7px; }
.gen-row { display: flex; height: 30px; }
.gen-row.second { margin-top: 5px; }
.gen-l { width: 484px; flex: none; margin-top: -1px; }
.gen-in { width: 958px; height: 29px; background: #fff; border-bottom: 1px solid #9a9a9a; color: #777; padding: 3px 3px; }
.browse { width: 76px; height: 29px; margin-left: 7px; }
.bottom-btns { display: flex; gap: 10px; padding: 8px 0 0 745px; }
.gen-save { width: 174px; height: 27px; }
.gen-log { width: 79px; height: 28px; }

.overlay { position: absolute; left: 0; top: 0; pointer-events: none; }
.note { position: absolute; line-height: 22px; color: #ed1c2e; white-space: nowrap; font-family: "Noto Sans CJK SC", "Noto Sans", sans-serif; }
</style>
